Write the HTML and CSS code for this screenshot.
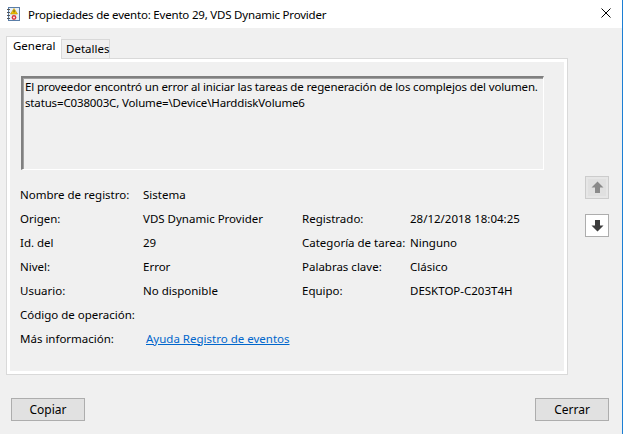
FILE: index.html
```html
<!DOCTYPE html>
<html lang="es">
<head>
<meta charset="utf-8">
<title>Propiedades de evento</title>
<link rel="stylesheet" href="styles.css">
</head>
<body>
<div class="window">
  <div class="titlebar">
    <svg class="app-icon" width="16" height="16" viewBox="0 0 16 16">
      <rect x="3.5" y="1.5" width="11" height="13" fill="#e8f0f8" stroke="#5a7ea8"/>
      <line x1="2" y1="3.5" x2="5" y2="3.5" stroke="#555"/>
      <line x1="2" y1="6.5" x2="5" y2="6.5" stroke="#555"/>
      <line x1="2" y1="9.5" x2="5" y2="9.5" stroke="#555"/>
      <line x1="2" y1="12.5" x2="5" y2="12.5" stroke="#555"/>
      <polygon points="9,2.5 12.5,8 5.5,8" fill="#f5c400" stroke="#b08a00" stroke-width="0.6"/>
      <rect x="8.6" y="4.2" width="0.9" height="2.2" fill="#333"/>
      <circle cx="9" cy="11.5" r="2.4" fill="#d9363e"/>
      <circle cx="9" cy="11.5" r="0.9" fill="#fff"/>
    </svg>
    <span class="title">Propiedades de evento: Evento 29, VDS Dynamic Provider</span>
    <svg class="close" width="10" height="10" viewBox="0 0 10 10">
      <path d="M0.5 0.5 L9.5 9.5 M9.5 0.5 L0.5 9.5" stroke="#000" stroke-width="1"/>
    </svg>
  </div>

  <div class="body">
    <div class="main">
      <div class="tabset">
        <div class="tabs">
          <div class="tab active">General</div>
          <div class="tab">Detalles</div>
        </div>
        <div class="panel">
          <div class="msgbox">El proveedor encontró un error al iniciar las tareas de regeneración de los complejos del volumen.<br>status=C038003C, Volume=\Device\HarddiskVolume6</div>
          <div class="props">
            <span class="lbl">Nombre de registro:</span><span class="val">Sistema</span><span></span><span></span>
            <span class="lbl">Origen:</span><span class="val">VDS Dynamic Provider</span><span class="lbl">Registrado:</span><span class="val">28/12/2018 18:04:25</span>
            <span class="lbl">Id. del</span><span class="val">29</span><span class="lbl">Categoría de tarea:</span><span class="val">Ninguno</span>
            <span class="lbl">Nivel:</span><span class="val">Error</span><span class="lbl">Palabras clave:</span><span class="val">Clásico</span>
            <span class="lbl">Usuario:</span><span class="val">No disponible</span><span class="lbl">Equipo:</span><span class="val">DESKTOP-C203T4H</span>
            <span class="lbl">Código de operación:</span><span></span><span></span><span></span>
            <span class="lbl">Más información:</span><span class="val"><a class="link" href="#">Ayuda Registro de eventos</a></span><span></span><span></span>
          </div>
        </div>
      </div>
      <div class="nav">
        <div class="navbtn disabled">
          <svg width="13" height="13" viewBox="0 0 13 13"><polygon points="6.5,0.5 12.5,6.5 9,6.5 9,12 4,12 4,6.5 0.5,6.5" fill="#8a8a8a"/></svg>
        </div>
        <div class="navbtn">
          <svg width="13" height="13" viewBox="0 0 13 13"><polygon points="6.5,12.5 12.5,6.5 9,6.5 9,1 4,1 4,6.5 0.5,6.5" fill="#3c3c3c"/></svg>
        </div>
      </div>
    </div>
    <div class="buttons">
      <button class="btn">Copiar</button>
      <button class="btn">Cerrar</button>
    </div>
  </div>
</div>
</body>
</html>
```

FILE: styles.css
```css
html, body {
  margin: 0;
  padding: 0;
}
body {
  width: 623px;
  height: 434px;
  overflow: hidden;
  background: #f0f0f0;
  font-family: "Noto Sans", "Open Sans", sans-serif;
  font-size: 12px;
  color: #000;
}
.window {
  width: 622px;
  height: 434px;
  border-right: 1px solid #1c7fd4;
  background: #f0f0f0;
}
.titlebar {
  height: 28px;
  background: #fff;
  display: flex;
  align-items: center;
}
.app-icon {
  margin-left: 5px;
  margin-top: -1px;
}
.title {
  margin-left: 7px;
  font-size: 11.5px;
  letter-spacing: -0.2px;
  flex: 1;
}
.close {
  margin-right: 11px;
  margin-top: -2px;
}
.body {
  padding-top: 8px;
}
.main {
  display: flex;
  align-items: flex-start;
}
.tabset {
  margin-left: 6px;
  width: 562px;
}
.tabs {
  display: flex;
  align-items: flex-end;
  height: 22px;
  position: relative;
  z-index: 1;
}
.tab {
  box-sizing: border-box;
  height: 19px;
  padding: 0 4px;
  border: 1px solid #d9d9d9;
  border-bottom: none;
  background: #f0f0f0;
  line-height: 18px;
  width: 49px;
  font-size: 11.5px;
}
.tab.active {
  width: 55px;
  background: #fff;
  border-right: none;
  padding-left: 6px;
  line-height: 18px;
  margin-bottom: -1px;
  height: 23px;
}
.panel {
  box-sizing: border-box;
  height: 317px;
  border: 1px solid #d9d9d9;
  box-shadow: inset 0 0 0 3px #fff;
  background: #f0f0f0;
  padding: 17px 0 0 14px;
}
.msgbox {
  box-sizing: border-box;
  width: 523px;
  height: 94px;
  border-top: 2px solid #808080;
  border-left: 2px solid #808080;
  border-right: 1px solid #fff;
  border-bottom: 1px solid #fff;
  box-shadow: inset 1px 1px 0 #a0a0a0;
  padding: 1px 2px;
  line-height: 16px;
  font-size: 11.5px;
  letter-spacing: -0.15px;
  white-space: nowrap;
}
.props {
  display: grid;
  grid-template-columns: 123px 159px 108px auto;
  grid-auto-rows: 24px;
  align-items: center;
  margin-top: 12px;
  margin-left: -1px;
  font-size: 11.5px;
}
.props span {
  white-space: nowrap;
}
.link {
  color: #0066cc;
  text-decoration: underline;
  margin-left: 3px;
}
.nav {
  margin-left: 17px;
  padding-top: 140px;
  display: flex;
  flex-direction: column;
  gap: 15px;
}
.navbtn {
  box-sizing: border-box;
  width: 24px;
  height: 23px;
  border: 1px solid #adadad;
  background: #fff;
  display: flex;
  align-items: center;
  justify-content: center;
  box-shadow: inset 0 0 0 2px #fff;
}
.navbtn.disabled {
  border-color: #cccccc;
  background: #e0e0e0;
  box-shadow: inset 0 0 0 2px #e6e6e6;
}
.buttons {
  display: flex;
  justify-content: space-between;
  padding: 23px 13px 0 11px;
}
.btn {
  box-sizing: border-box;
  width: 74px;
  height: 23px;
  border: 1px solid #adadad;
  background: #e1e1e1;
  font-family: "Noto Sans", "Open Sans", sans-serif;
  font-size: 12px;
  color: #000;
  padding: 0;
  margin: 0;
}
```
